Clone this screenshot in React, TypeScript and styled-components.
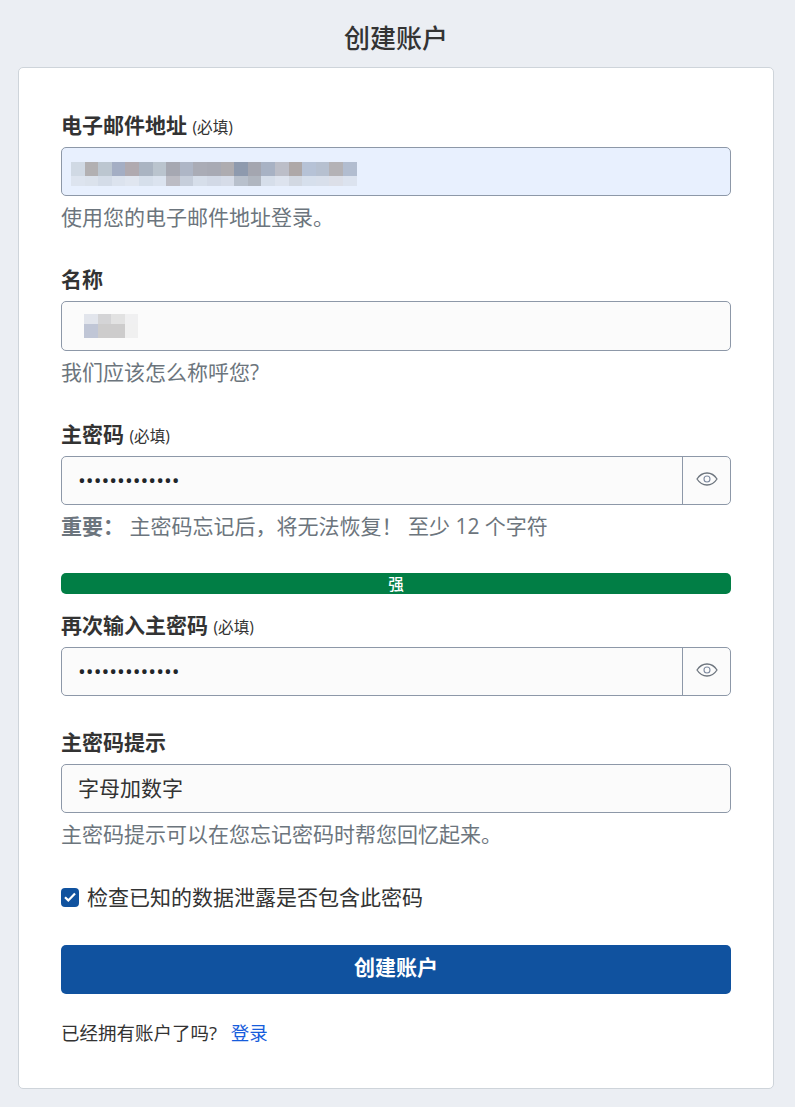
import styled, { createGlobalStyle } from 'styled-components';

const GlobalStyle = createGlobalStyle`
  html, body {
    margin: 0;
    padding: 0;
    background: #ebeef3;
    color: #333333;
    font-family: "Open Sans", "Noto Sans CJK SC", sans-serif;
  }
  * {
    box-sizing: border-box;
  }
`;

const emailRows = [
  {
    height: 14,
    colors: ['#d0d9e4', '#b2b0b2', '#bcc6d0', '#a4aec4', '#b0aab0', '#aab4c2', '#bac4ce', '#a6a8b2', '#aeb6c6', '#aaacb6', '#a8aab4', '#aeacb0', '#8e9aae', '#a4a6b0', '#a8b2c4', '#bcbec8', '#aea8a8', '#b6c2d6', '#b6c0d0', '#b4b2b6', '#b2bdd0'],
  },
  {
    height: 10,
    colors: ['#dde4ef', '#dbe2ec', '#d4dce8', '#dce3ee', '#e0e6f0', '#d6dfeb', '#dbe3ef', '#bcbcc4', '#c6cedb', '#d6deea', '#d2d9e6', '#d6dce8', '#b8c0cc', '#b0b6c0', '#d6deea', '#dde3ee', '#d2d8e2', '#d6dfec', '#d8dfeb', '#dcdfe8', '#dce3ef'],
  },
];

const nameRows = [
  { height: 10, colors: ['#e2e5ec', '#d4d4d6', '#e2e2e2', '#f0f0f1'] },
  { height: 14, colors: ['#c0c6d6', '#cdcccc', '#cdcccc', '#f0f0f0'] },
];

type MosaicProps = {
  rows: { height: number; colors: string[] }[];
};

function Mosaic({ rows }: MosaicProps) {
  const cell = 13.6;
  const width = rows[0].colors.length * cell;
  return (
    <svg width={width} height={24} viewBox={`0 0 ${width} 24`} shapeRendering="crispEdges">
      {rows.map((row, r) =>
        row.colors.map((color, c) => (
          <rect
            key={`${r}-${c}`}
            x={c * cell}
            y={r === 0 ? 0 : rows[0].height}
            width={cell}
            height={row.height}
            fill={color}
          />
        )),
      )}
    </svg>
  );
}

function EyeIcon() {
  return (
    <svg width="22" height="14" viewBox="0 0 22 14" fill="none" stroke="#6d757e" strokeWidth="1.3">
      <path d="M1 7C3.6 3 7 1 11 1s7.4 2 10 6c-2.6 4-6 6-10 6S3.6 11 1 7Z" />
      <circle cx="11" cy="7" r="3" strokeWidth="1.1" stroke="#7f8ba0" />
    </svg>
  );
}

function PasswordRow() {
  return (
    <InputGroup>
      <PasswordInput type="password" value="1234567890123" readOnly />
      <EyeButton type="button">
        <EyeIcon />
      </EyeButton>
    </InputGroup>
  );
}

export default function App() {
  return (
    <Page>
      <GlobalStyle />
      <Title>创建账户</Title>
      <Card>
        <Field>
          <Label>
            电子邮件地址 <Required>(必填)</Required>
          </Label>
          <BlurredBox $autofill>
            <Mosaic rows={emailRows} />
          </BlurredBox>
          <Hint>使用您的电子邮件地址登录。</Hint>
        </Field>

        <Field>
          <Label>名称</Label>
          <BlurredBox $tall>
            <Mosaic rows={nameRows} />
          </BlurredBox>
          <Hint>我们应该怎么称呼您?</Hint>
        </Field>

        <Field>
          <Label>
            主密码 <Required>(必填)</Required>
          </Label>
          <PasswordRow />
          <Hint>
            <strong>{'重要\uFF1A'}</strong> {'主密码忘记后\uFF0C将无法恢复\uFF01'} 至少 12 个字符
          </Hint>
        </Field>

        <StrengthBar>强</StrengthBar>

        <Field>
          <Label>
            再次输入主密码 <Required>(必填)</Required>
          </Label>
          <PasswordRow />
        </Field>

        <Field>
          <Label>主密码提示</Label>
          <TextInput type="text" value="字母加数字" readOnly />
          <Hint>主密码提示可以在您忘记密码时帮您回忆起来。</Hint>
        </Field>

        <CheckRow>
          <CheckBox>
            <svg width="12" height="10" viewBox="0 0 12 10" fill="none" stroke="#ffffff" strokeWidth="2.2">
              <path d="M1 5.2 4.3 8.4 11 1.4" />
            </svg>
          </CheckBox>
          检查已知的数据泄露是否包含此密码
        </CheckRow>

        <SubmitButton type="button">创建账户</SubmitButton>

        <LoginRow>
          已经拥有账户了吗? <LoginLink href="#">登录</LoginLink>
        </LoginRow>
      </Card>
    </Page>
  );
}

const Page = styled.div`
  width: 795px;
  height: 1107px;
  padding: 0 21px 18px 18px;
  overflow: hidden;
`;

const Title = styled.h1`
  margin: 0;
  height: 67px;
  padding-top: 20px;
  font-size: 26px;
  line-height: 36px;
  font-weight: 500;
  text-align: center;
  color: #333333;
`;

const Card = styled.div`
  height: 1022px;
  padding: 43px 42px 0;
  background: #ffffff;
  border: 1px solid #ced4da;
  border-radius: 5px;
`;

const Field = styled.div`
  margin-bottom: 32px;
`;

const Label = styled.div`
  height: 36px;
  line-height: 28px;
  font-size: 21px;
  font-weight: 700;
  color: #333333;
`;

const Required = styled.span`
  font-size: 15.6px;
  font-weight: 400;
`;

const BlurredBox = styled.div<{ $autofill?: boolean; $tall?: boolean }>`
  display: flex;
  align-items: center;
  height: ${({ $tall }) => ($tall ? '50px' : '49px')};
  padding-left: ${({ $autofill }) => ($autofill ? '9px' : '22px')};
  padding-top: ${({ $autofill }) => ($autofill ? '5px' : '0')};
  background: ${({ $autofill }) => ($autofill ? '#e8f0fe' : '#fbfbfb')};
  border: 1px solid #8d98a8;
  border-radius: 5px;
`;

const InputGroup = styled.div`
  display: flex;
  height: 49px;
  border: 1px solid #8d98a8;
  border-radius: 5px;
  background: #fbfbfb;
`;

const PasswordInput = styled.input`
  flex: 1;
  min-width: 0;
  padding: 0 16px 2px;
  border: 0;
  background: transparent;
  border-radius: 5px 0 0 5px;
  color: #212529;
  font-family: "Open Sans", "Noto Sans CJK SC", sans-serif;
  font-size: 20.8px;
  outline: none;
`;

const EyeButton = styled.button`
  display: flex;
  align-items: center;
  justify-content: center;
  width: 48px;
  padding: 0 0 3px;
  border: 0;
  border-left: 1px solid #8d98a8;
  background: transparent;
`;

const TextInput = styled.input`
  display: block;
  width: 100%;
  height: 49px;
  padding: 0 16px 3px;
  border: 1px solid #8d98a8;
  border-radius: 5px;
  background: #fbfbfb;
  color: #333333;
  font-family: "Open Sans", "Noto Sans CJK SC", sans-serif;
  font-size: 21px;
  outline: none;
`;

const Hint = styled.div`
  margin-top: 6px;
  padding-bottom: 1px;
  line-height: 30px;
  font-size: 21px;
  color: #6c757d;

  strong {
    font-weight: 700;
  }
`;

const StrengthBar = styled.div`
  height: 21px;
  margin: -1px 0 17px;
  background: #017e45;
  border-radius: 5px;
  color: #ffffff;
  font-size: 15.6px;
  font-weight: 500;
  line-height: 22px;
  text-align: center;
`;

const CheckRow = styled.div`
  display: flex;
  align-items: center;
  gap: 8px;
  height: 30px;
  padding-bottom: 2px;
  font-size: 21px;
  color: #333333;
`;

const CheckBox = styled.span`
  display: flex;
  align-items: center;
  justify-content: center;
  width: 18px;
  height: 19px;
  margin-top: 2px;
  background: #10529f;
  border-radius: 4px;
`;

const SubmitButton = styled.button`
  display: block;
  width: 100%;
  height: 49px;
  margin-top: 33px;
  padding: 0 0 7px;
  border: 0;
  border-radius: 5px;
  background: #10529f;
  color: #ffffff;
  font-family: "Open Sans", "Noto Sans CJK SC", sans-serif;
  font-size: 21px;
  font-weight: 700;
`;

const LoginRow = styled.div`
  margin-top: 26px;
  line-height: 26px;
  font-size: 18.5px;
  color: #333333;
`;

const LoginLink = styled.a`
  margin-left: 9px;
  color: #175ddc;
  text-decoration: none;
`;
